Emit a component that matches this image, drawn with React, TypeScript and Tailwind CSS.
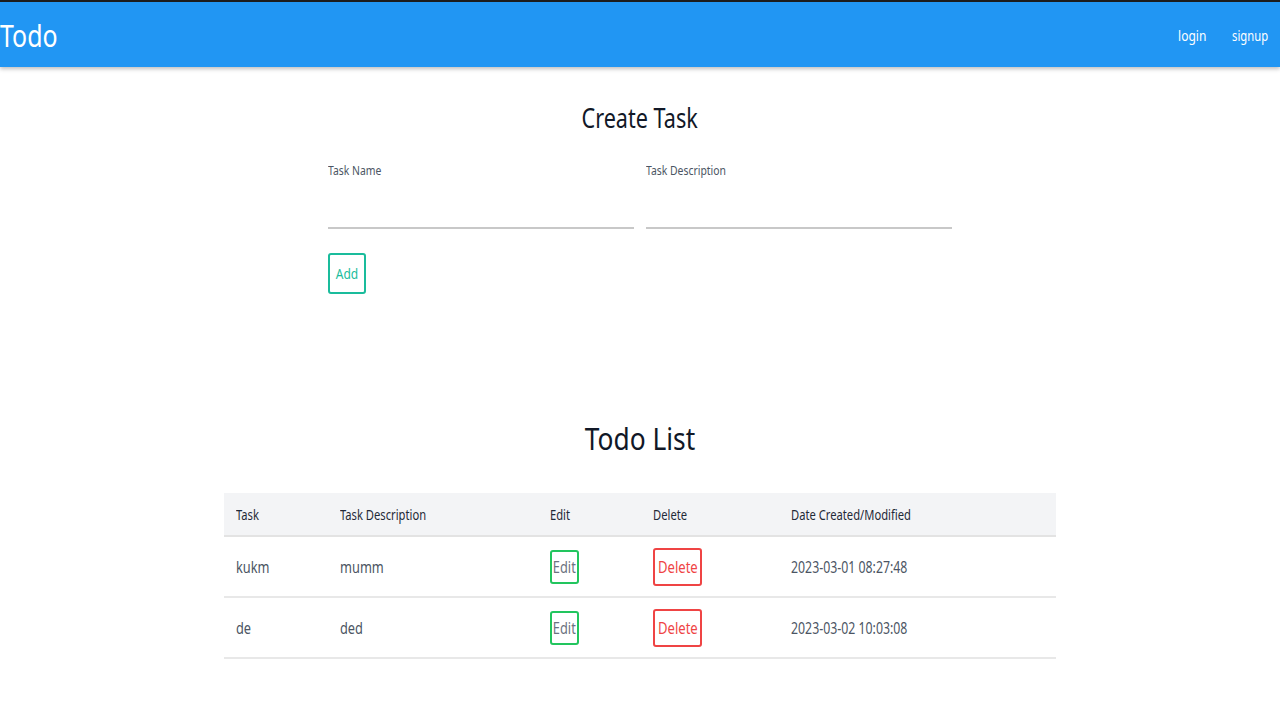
import type { ReactNode } from "react";

// text in the reference is horizontally squeezed, so narrow each run a bit
function Narrow({ children, className = "origin-left scale-x-[0.8]" }: { children: ReactNode; className?: string }) {
    return <span className={`inline-block whitespace-nowrap ${className}`}>{children}</span>;
}

export default function App() {
    const todos = [
        { name: "kukm", desc: "mumm", date: "2023-03-01 08:27:48" },
        { name: "de", desc: "ded", date: "2023-03-02 10:03:08" },
    ];

    return (
        <div className="min-h-[720px] bg-white font-['Noto_Sans',sans-serif]">
            {/* Navbar */}
            <nav className="flex h-[67px] items-center justify-between border-t-2 border-[#1c1c1c] bg-[#2196f3] shadow-[0_2px_4px_rgba(0,0,0,0.25)]">
                <span className="pt-[2px] text-[30px] leading-none text-white">
                    <Narrow className="origin-left scale-x-[0.83]">Todo</Narrow>
                </span>
                <div className="flex items-center gap-[14px] pt-[2px] pr-[12px] text-[15px] text-white">
                    <Narrow className="origin-right scale-x-[0.8]">login</Narrow>
                    <Narrow className="origin-right scale-x-[0.75]">signup</Narrow>
                </div>
            </nav>

            {/* Create task */}
            <div className="mx-auto w-[624px]">
                <h2 className="mt-[31px] text-center text-[27px] leading-[40px] text-[#111827]">
                    <Narrow className="origin-center scale-x-[0.8]">Create Task</Narrow>
                </h2>
                <div className="mt-[24px] grid grid-cols-2 gap-[12px]">
                    <div className="flex flex-col">
                        <label className="text-[13px] leading-[16px] text-[#4b5563]">
                            <Narrow>Task Name</Narrow>
                        </label>
                        <input className="h-[51px] border-b-2 border-[#c8c8c8] outline-none" />
                    </div>
                    <div className="flex flex-col">
                        <label className="text-[13px] leading-[16px] text-[#4b5563]">
                            <Narrow>Task Description</Narrow>
                        </label>
                        <input className="h-[51px] border-b-2 border-[#c8c8c8] outline-none" />
                    </div>
                </div>
                <button className="mt-[24px] flex h-[41px] w-[38px] items-center justify-center rounded-[3px] border-2 border-[#1abc9c] text-[15px] text-[#1abc9c]">
                    <Narrow className="origin-center scale-x-[0.8]">Add</Narrow>
                </button>
            </div>

            {/* Todo list */}
            <h2 className="mt-[124px] text-center text-[31px] leading-[40px] text-[#111827]">
                <Narrow className="origin-center scale-x-[0.85]">Todo List</Narrow>
            </h2>
            <div className="mx-auto mt-[35px] w-[832px]">
                <table className="w-full table-fixed border-collapse text-left">
                    <colgroup>
                        <col className="w-[104px]" />
                        <col className="w-[210px]" />
                        <col className="w-[103px]" />
                        <col className="w-[138px]" />
                        <col />
                    </colgroup>
                    <thead>
                        <tr className="h-[43px] border-b-2 border-[#e3e3e3] bg-[#f3f4f6] text-[14px] text-[#1f2937]">
                            <th className="px-[12px] font-normal"><Narrow>Task</Narrow></th>
                            <th className="px-[12px] font-normal"><Narrow>Task Description</Narrow></th>
                            <th className="px-[12px] font-normal"><Narrow>Edit</Narrow></th>
                            <th className="px-[12px] font-normal"><Narrow>Delete</Narrow></th>
                            <th className="px-[12px] font-normal"><Narrow>Date Created/Modified</Narrow></th>
                        </tr>
                    </thead>
                    <tbody>
                        {todos.map((t) => (
                            <tr key={t.name} className="h-[61px] border-b-2 border-[#e8e8e8] text-[16px] text-[#4b5563]">
                                <td className="px-[12px]"><Narrow>{t.name}</Narrow></td>
                                <td className="px-[12px]"><Narrow>{t.desc}</Narrow></td>
                                <td className="px-[12px]">
                                    <button className="flex h-[34px] w-[29px] items-center justify-center rounded-[3px] border-2 border-[#22c55e] text-[16px] text-[#6b7280]">
                                        <Narrow className="origin-center scale-x-[0.8]">Edit</Narrow>
                                    </button>
                                </td>
                                <td className="px-[12px]">
                                    <button className="flex h-[38px] w-[49px] items-center justify-center rounded-[3px] border-2 border-[#ef4444] text-[17px] text-[#ef4444]">
                                        <Narrow className="origin-center scale-x-[0.77]">Delete</Narrow>
                                    </button>
                                </td>
                                <td className="px-[12px]">
                                    <Narrow className="origin-left scale-x-[0.77]">{t.date}</Narrow>
                                </td>
                            </tr>
                        ))}
                    </tbody>
                </table>
            </div>
        </div>
    );
}
